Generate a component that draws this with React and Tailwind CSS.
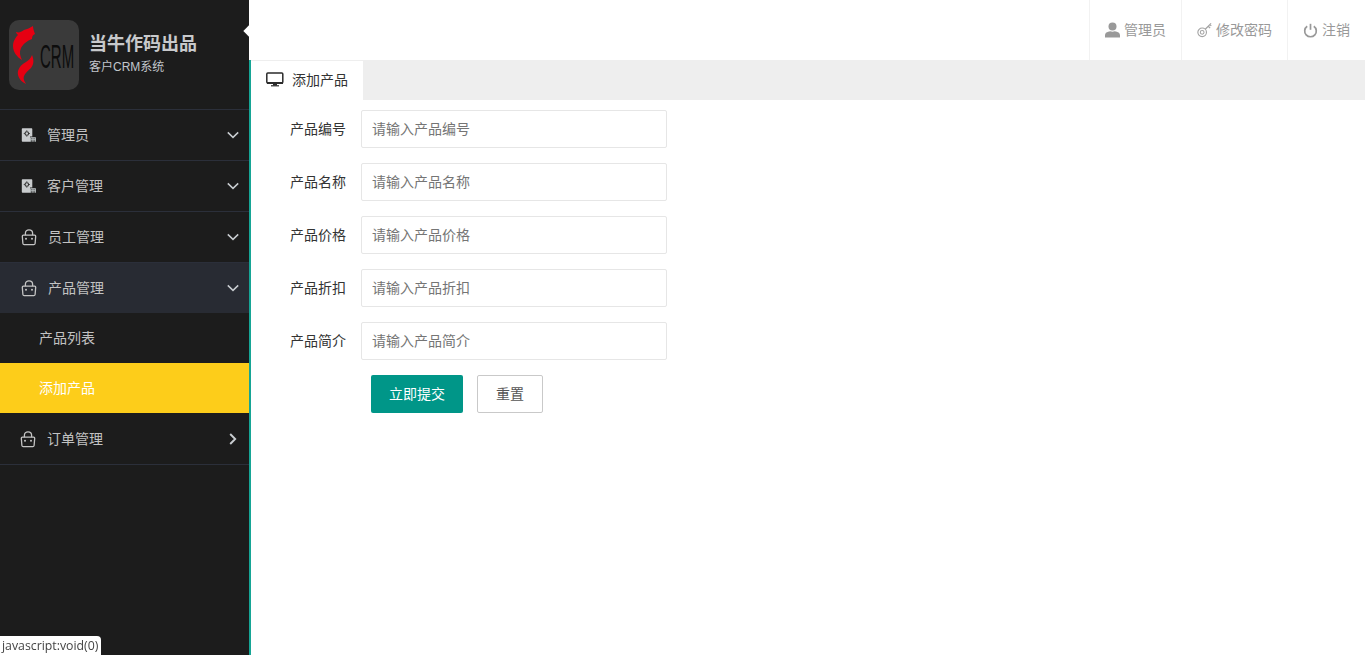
import React from "react";

function DocIcon() {
  return (
    <svg width="15" height="15" viewBox="0 0 15 15" className="shrink-0">
      <path d="M.8 1.200C.8 .6 1.200.2 1.800.2h8.500c.6 0 1 .4 1 1V8.500H9v5.300H1.800c-.6 0-1-.4-1-1z" fill="#c9ccce" />
      <circle cx="5.800" cy="5.500" r="1.800" fill="none" stroke="#333" strokeWidth="1.100" />
      <path d="M5.800 2.400v1M5.800 7.600v1M2.800 5.500h1M7.800 5.500h1" stroke="#333" strokeWidth="1" />
      <path d="M9.700 13.800V9.800h4.600v4" fill="none" stroke="#c2c8ca" strokeWidth="1.100" />
      <path d="M11.300 9.800v4M12.800 9.800v4M9.700 11.700h4.600" stroke="#c2c8ca" strokeWidth=".8" />
    </svg>
  );
}

function BagIcon() {
  return (
    <svg width="16" height="17" viewBox="0 0 16 17" fill="none" className="shrink-0">
      <path d="M2.300 6.200h11.400c.6 0 1 .4 1 1l-.6 7.300c-.1.7-.6 1.200-1.300 1.200H3.200c-.7 0-1.200-.5-1.300-1.200L1.300 7.200c0-.6.400-1 1-1z" stroke="#c4c4c4" strokeWidth="1.300" />
      <path d="M4.400 6.200V4.200C4.400 2.200 6 .9 8 .9s3.600 1.300 3.600 3.300v2" stroke="#c4c4c4" strokeWidth="1.300" />
      <circle cx="5" cy="9.800" r="1" fill="#c4c4c4" />
      <circle cx="11" cy="9.800" r="1" fill="#c4c4c4" />
    </svg>
  );
}

function Chevron({ right }) {
  return (
    <svg width="12" height="12" viewBox="0 0 12 12" fill="none" className="shrink-0">
      {right ? (
        <path d="M3.200 1 8.200 6l-5 5" stroke="#c8ccd0" strokeWidth="1.900" />
      ) : (
        <path d="M.8 3.400 6 8.400l5.200-5" stroke="#c8ccd0" strokeWidth="1.500" />
      )}
    </svg>
  );
}

function MenuRow({ icon, label, gap, active, right, pl }) {
  return (
    <a className={`flex h-[50px] items-center justify-between pr-[10px] text-sm text-[#c2c2c2] ${pl} ${active ? "bg-[#282b33]" : ""}`}>
      <span className={`flex items-center ${gap}`}>
        {icon}
        <span>{label}</span>
      </span>
      <Chevron right={right} />
    </a>
  );
}

function Divider() {
  return <div className="h-px bg-[#2b2f3a]" />;
}

function TopItem({ icon, label }) {
  return (
    <a className="flex h-full items-center gap-[4px] border-l border-[#f2f2f2] px-[15px] text-sm text-[#999999]">
      {icon}
      <span>{label}</span>
    </a>
  );
}

function Field({ label, placeholder }) {
  return (
    <div className="flex h-[38px] items-center">
      <label className="w-[95px] text-right text-sm text-[#333333]">{label}</label>
      <input
        readOnly
        placeholder={placeholder}
        className="ml-[15px] h-[38px] w-[306px] rounded-[2px] border border-[#e6e6e6] bg-white pl-[10px] text-sm text-[#333333] outline-none placeholder:text-[#757575]"
      />
    </div>
  );
}

export default function App() {
  return (
    <div className="flex h-[655px] w-full overflow-hidden bg-white font-['Liberation_Sans','Noto_Sans_CJK_SC',sans-serif]">
      <aside className="relative flex w-[249px] shrink-0 flex-col bg-[#1c1c1c]">
        <div className="flex h-[109px] items-start pl-[9px] pt-[20px]">
          <div className="h-[70px] w-[70px] shrink-0 rounded-[10px] bg-[#3a3a3a]">
            <svg width="70" height="70" viewBox="0 0 70 70">
              <path d="M24 6c0 3 1 5 2 8-2 1-3 2-3 5-5 2-8 4-11 9-2 4-1 8 1 12-5-3-9-8-9-14 0-5 3-9 5-11-1-1-2-2-2-3 3 1 5 0 8-2 3-1 6-2 9-4z" fill="#e60012" />
              <path d="M23 35c2 5 2 9-1 13-3 3-6 5-7 8-1 2 0 5 2 8-6-3-9-8-8-13 1-4 4-7 8-9 3-2 5-4 6-7z" fill="#e60012" />
              <text transform="translate(31 48) scale(1 2.2)" fontSize="15" fontFamily="Liberation Sans" fill="#0d0d0d">CRM</text>
            </svg>
          </div>
          <div className="ml-[10px] flex flex-col">
            <span className="mt-[12px] text-lg leading-[24px] font-bold text-[#c8c9cb]">当牛作码出品</span>
            <span className="mt-[2px] text-xs leading-[18px] text-[#c2c6cc]">客户CRM系统</span>
          </div>
        </div>
        <div className="absolute top-[27px] right-[-4px] h-[8px] w-[8px] rotate-45 bg-white" />
        <Divider />
        <MenuRow icon={<DocIcon />} label="管理员" gap="gap-[11px]" pl="pl-[21px]" />
        <Divider />
        <MenuRow icon={<DocIcon />} label="客户管理" gap="gap-[11px]" pl="pl-[21px]" />
        <Divider />
        <MenuRow icon={<BagIcon />} label="员工管理" gap="gap-[11px]" pl="pl-[21px]" />
        <Divider />
        <MenuRow icon={<BagIcon />} label="产品管理" gap="gap-[11px]" pl="pl-[21px]" active />
        <a className="flex h-[50px] items-center pl-[39px] text-sm text-[#c2c2c2]">产品列表</a>
        <a className="flex h-[50px] items-center bg-[#fdcd1a] pl-[39px] text-sm text-white">添加产品</a>
        <div className="h-px bg-[#1c1c1c]" />
        <MenuRow icon={<BagIcon />} label="订单管理" gap="gap-[11px]" pl="pl-[20px]" right />
        <Divider />
      </aside>

      <div className="flex min-w-0 flex-1 flex-col">
        <header className="flex h-[60px] shrink-0 justify-end">
          <TopItem
            label="管理员"
            icon={
              <svg width="15" height="16" viewBox="0 0 15 16">
                <circle cx="7.500" cy="4.400" r="4" fill="#999" />
                <path d="M0 15.500v-2.300c0-2 1.600-3.200 3.200-3.500l2-.5c1.400.6 3.200.6 4.600 0l2 .5c1.600.3 3.200 1.500 3.200 3.500v2.300z" fill="#999" />
              </svg>
            }
          />
          <TopItem
            label="修改密码"
            icon={
              <svg width="15" height="16" viewBox="0 0 16 16" fill="none" stroke="#a3a3a3">
                <circle cx="5.500" cy="10.500" r="4.600" strokeWidth="1.200" />
                <circle cx="5.500" cy="10.500" r="2" strokeWidth="1.100" />
                <path d="M8.800 7.200 15 1M12 4l2 2M13.800 2.200l1.400 1.400" strokeWidth="1.300" />
              </svg>
            }
          />
          <TopItem
            label="注销"
            icon={
              <svg width="15" height="15" viewBox="0 0 15 15" fill="none" stroke="#999" strokeWidth="1.700">
                <path d="M4.200 3.200a5.800 5.800 0 1 0 6.600 0" />
                <path d="M7.500 .8v6" />
              </svg>
            }
          />
        </header>

        <main className="flex flex-1 flex-col border-l-2 border-[#16a595]">
          <div className="flex h-[40px] shrink-0 bg-[#eeeeee] pt-px">
            <div className="flex w-[112px] items-center bg-white pb-[2px] pl-[15px] text-[13px] text-[#333333]">
              <svg width="18" height="15" viewBox="0 0 18 15" className="shrink-0">
                <rect x=".8" y="1" width="16" height="10" rx="1" fill="none" stroke="#2b2b2b" strokeWidth="1.500" />
                <rect x="1" y="10" width="16" height="2" fill="#2b2b2b" />
                <rect x="7" y="12" width="4" height="1.500" fill="#2b2b2b" />
                <rect x="5" y="13.200" width="8" height="1.200" fill="#2b2b2b" />
              </svg>
              <span className="ml-[8px] text-sm">添加产品</span>
            </div>
          </div>
          <form className="flex flex-col gap-[15px] pt-[10px]">
            <Field label="产品编号" placeholder="请输入产品编号" />
            <Field label="产品名称" placeholder="请输入产品名称" />
            <Field label="产品价格" placeholder="请输入产品价格" />
            <Field label="产品折扣" placeholder="请输入产品折扣" />
            <Field label="产品简介" placeholder="请输入产品简介" />
            <div className="flex gap-[14px] pl-[120px]">
              <button type="button" className="h-[38px] w-[92px] rounded-[2px] bg-[#009688] text-sm text-white">立即提交</button>
              <button type="button" className="h-[38px] w-[66px] rounded-[2px] border border-[#c9c9c9] bg-white text-sm text-[#555555]">重置</button>
            </div>
          </form>
        </main>
      </div>

      <div className="fixed bottom-0 left-0 h-[19px] w-[101px] rounded-tr-[4px] bg-white pl-[2px] font-['Open_Sans','Liberation_Sans',sans-serif] text-[12.3px] leading-[20px] text-[#444444]">
        javascript:void(0)
      </div>
    </div>
  );
}
